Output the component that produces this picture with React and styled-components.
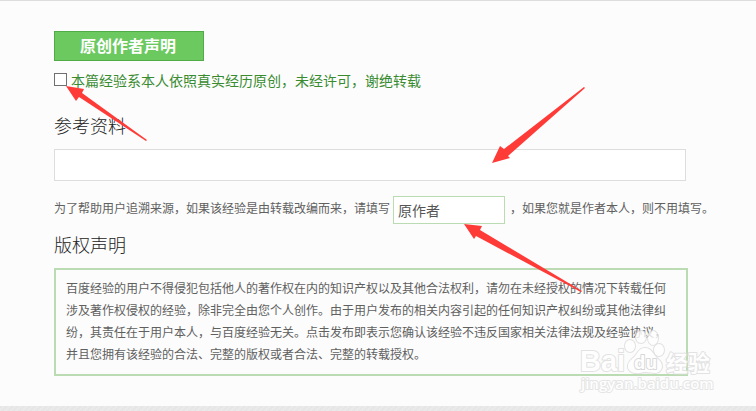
import React from "react";
import styled, { createGlobalStyle } from "styled-components";

const GlobalStyle = createGlobalStyle`
  * {
    box-sizing: border-box;
  }

  body {
    margin: 0;
    background: #fcfcfc;
    font-family: "Noto Sans CJK SC", sans-serif;
    font-size: 12px;
    color: #606060;
  }
`;

const Page = styled.div`
  position: relative;
  display: flex;
  flex-direction: column;
  border-top: 1px solid #ddd;
`;

const Form = styled.form`
  display: flex;
  flex-direction: column;
  padding: 30px 36px 30px 54px;
`;

const DeclareButton = styled.button`
  align-self: flex-start;
  width: 150px;
  height: 30px;
  padding: 0 2px 2px 0;
  border: 1px solid #51ab47;
  background: #6bc95f;
  color: #fff;
  font-family: inherit;
  font-size: 16px;
  font-weight: bold;
  line-height: 24px;
`;

const CheckRow = styled.div`
  display: flex;
  align-items: flex-start;
  gap: 4px;
  height: 20px;
  margin-top: 10px;
`;

const Checkbox = styled.input`
  appearance: none;
  width: 13px;
  height: 13px;
  margin: 2px 0 0;
  border: 1px solid #707070;
  background: #fff;

  &:checked {
    background: #6bc95f;
  }
`;

const CheckLabel = styled.label`
  color: #398b30;
  font-size: 14px;
  line-height: 18px;
`;

const Title = styled.h2`
  margin: 0;
  padding-top: ${(props) => props.$gap}px;
  color: #222;
  font-size: 18px;
  font-weight: 300;
  line-height: 24px;
`;

const ReferenceInput = styled.input`
  height: 32px;
  margin: 12px 34px 0 0;
  padding: 0 8px;
  border: 1px solid #ddd;
  background: #fff;
  font-family: inherit;
  font-size: 14px;
  color: #555;
`;

const Hint = styled.div`
  display: flex;
  align-items: flex-start;
  margin-top: 15px;
  line-height: 24px;
  white-space: nowrap;
`;

const AuthorInput = styled.input`
  width: 112px;
  height: 28px;
  margin: 0 5px 0 3px;
  padding: 0 4px;
  border: 1px solid #bbdbb2;
  background: #fff;
  font-family: inherit;
  font-size: 14px;
  color: #555;

  &::placeholder {
    color: #555;
    opacity: 1;
  }
`;

const Copyright = styled.p`
  margin: 12px 32px 0 0;
  padding: 7px 10px 9px;
  border: 2px solid #bbdbb2;
  line-height: 22px;
`;

const Footer = styled.div`
  height: 5px;
  background: repeating-linear-gradient(
    135deg,
    #e6e6e6 0,
    #e6e6e6 2px,
    #eaeaea 2px,
    #eaeaea 4px
  );
`;

const Arrows = styled.svg`
  position: absolute;
  top: -1px;
  left: 0;
  pointer-events: none;
`;

const Watermark = styled.svg`
  position: absolute;
  right: 36px;
  bottom: 11px;
  pointer-events: none;
`;

const App = () => {
  return (
    <>
      <GlobalStyle />
      <Page>
        <Form onSubmit={(e) => e.preventDefault()}>
          <DeclareButton type="button">原创作者声明</DeclareButton>
          <CheckRow>
            <Checkbox type="checkbox" id="original" />
            <CheckLabel htmlFor="original">
              本篇经验系本人依照真实经历原创，未经许可，谢绝转载
            </CheckLabel>
          </CheckRow>

          <Title $gap={22}>
            <label htmlFor="reference">参考资料</label>
          </Title>
          <ReferenceInput type="text" id="reference" />
          <Hint>
            <label htmlFor="author">
              为了帮助用户追溯来源，如果该经验是由转载改编而来，请填写
            </label>
            <AuthorInput type="text" id="author" placeholder="原作者" />
            <span>，如果您就是作者本人，则不用填写。</span>
          </Hint>

          <Title $gap={8}>版权声明</Title>
          <Copyright>
            百度经验的用户不得侵犯包括他人的著作权在内的知识产权以及其他合法权利，请勿在未经授权的情况下转载任何涉及著作权侵权的经验，除非完全由您个人创作。由于用户发布的相关内容引起的任何知识产权纠纷或其他法律纠纷，其责任在于用户本人，与百度经验无关。点击发布即表示您确认该经验不违反国家相关法律法规及经验协议，并且您拥有该经验的合法、完整的版权或者合法、完整的转载授权。
          </Copyright>
        </Form>
        <Footer />

        <Arrows width="600" height="300" viewBox="0 0 600 300" fill="#ff3b38">
          <path d="M66 86 L84 89 L82 93 L147 140 L146 141 L79 97 L76 101 Z" />
          <path d="M492 163 L500 146 L504 149 L584 87 L585 88 L508 156 L510 158 Z" />
          <path d="M464 224 L482 226 L480 230 L582 291 L581 292 L476 236 L474 239 Z" />
        </Arrows>

        <Watermark
          width="144"
          height="72"
          viewBox="0 0 144 72"
          fill="#fff"
          stroke="#dcdcdc"
          strokeWidth="2"
          strokeLinejoin="round"
          paintOrder="stroke"
          fontFamily="Open Sans, Noto Sans CJK SC, sans-serif"
          fontWeight="bold"
        >
          <g opacity="0.8">
            <text
              x="4"
              y="43"
              fontSize="29"
              fontFamily="Liberation Sans, sans-serif"
            >
              Bai
            </text>
            <ellipse cx="54" cy="18" rx="5" ry="6" />
            <ellipse cx="65" cy="9" rx="5" ry="6" />
            <ellipse cx="77" cy="10" rx="5" ry="7" />
            <ellipse cx="83" cy="22" rx="5" ry="6" />
            <path d="M69 20 C76 20 77 27 83 32 C89 38 85 45 79 45 C74 45 70 43 64 45 C57 46 51 43 52 37 C53 32 57 31 60 27 C63 22 65 20 69 20 Z" />
            <text x="58" y="41" fontSize="18" stroke="#d0d0d0">
              du
            </text>
            <text
              x="90"
              y="43"
              fontSize="22"
              fontFamily="Noto Sans CJK SC, sans-serif"
            >
              经验
            </text>
            <text x="5" y="61" fontSize="15" fontWeight="600" stroke="#e0e0e0">
              jingyan.baidu.com
            </text>
          </g>
        </Watermark>
      </Page>
    </>
  );
};

export default App;
